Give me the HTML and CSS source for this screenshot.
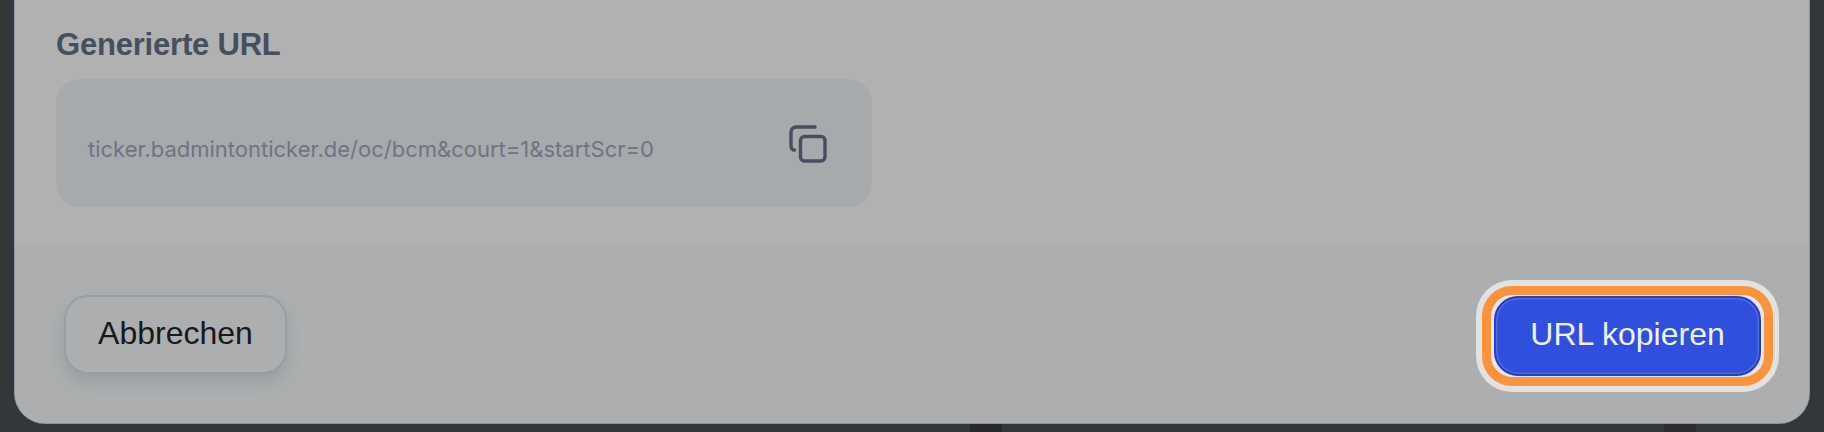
FILE: index.html
```html
<!DOCTYPE html>
<html lang="en">
<head>
    <meta charset="UTF-8">
    <meta name="viewport" content="width=device-width, initial-scale=1.0">
    <title>Generierte URL</title>
    <link rel="stylesheet" href="styles.css">
</head>
<body>
    <div class="modal">
        <div class="modal-body">
            <h3>Generierte URL</h3>
            <div class="url-box">
                <span class="url-text">ticker.badmintonticker.de/oc/bcm&amp;court=1&amp;startScr=0</span>
                <button class="copy-button" aria-label="URL kopieren">
                    <svg viewBox="0 0 38 38" width="38" height="38" fill="none" stroke="#454f60" stroke-width="3.4" stroke-linecap="round" stroke-linejoin="round">
                        <rect x="11.5" y="11.5" width="24.5" height="24.5" rx="4"></rect>
                        <path d="M26 2H7a5 5 0 0 0-5 5v14.5a3.5 3.5 0 0 0 3.5 3.5"></path>
                    </svg>
                </button>
            </div>
        </div>
        <div class="modal-footer">
            <button class="cancel-button">Abbrechen</button>
            <div class="focus-ring">
                <div class="focus-inner">
                    <button class="primary-button">URL kopieren</button>
                </div>
            </div>
        </div>
    </div>
</body>
</html>
```

FILE: styles.css
```css
* {
    box-sizing: border-box;
}
body {
    margin: 0;
    height: 432px;
    overflow: hidden;
    padding: 0 15px;
    background: linear-gradient(to right, #34373a 970px, #26282c 970px, #26282c 1002px, #34373a 1002px, #34373a 1664px, #2b2d31 1664px, #2b2d31 1696px, #34373a 1696px);
    font-family: 'Liberation Sans', Arial, sans-serif;
}
.modal {
    height: 423px;
    background: #b1b1b1;
    border-radius: 0 0 30px 30px;
    box-shadow: -1px 0 0 #8e97a6, 1px 0 0 #8f9396, 0 1px 0 #8f9396;
    display: flex;
    flex-direction: column;
    overflow: hidden;
}
.modal-body {
    height: 246px;
    padding: 28px 41px 0;
}
h3 {
    margin: 0 0 18px;
    height: 33px;
    font-size: 31px;
    line-height: 33px;
    font-weight: bold;
    letter-spacing: -0.2px;
    color: #454f60;
}
.url-box {
    width: 816px;
    height: 128px;
    padding: 0 38px 0 32px;
    background: #a6aaad;
    border-radius: 24px;
    display: flex;
    align-items: center;
    justify-content: space-between;
}
.url-text {
    font-family: 'Inter', sans-serif;
    font-size: 22px;
    color: #6d7584;
    margin-top: 11px;
}
.copy-button {
    padding: 0;
    border: none;
    background: none;
    display: flex;
    margin-top: 1px;
    margin-right: 7px;
}
.modal-footer {
    flex: 1;
    padding: 0 30px 0 49px;
    background: #acaeaf;
    display: flex;
    align-items: flex-start;
    justify-content: space-between;
    border-top: 1px solid #aeb0b0;
}
.cancel-button {
    margin-top: 48px;
    width: 223px;
    height: 79px;
    padding: 0 0 2px;
    background: #acaeb0;
    border: 2px solid #9a9da6;
    border-radius: 24px;
    box-shadow: 0 8px 14px rgba(110, 115, 125, 0.28);
    font-family: inherit;
    font-size: 32px;
    color: #18191b;
}
.focus-ring {
    margin-top: 33px;
    padding: 6px;
    background: #e2e2e2;
    border-radius: 36px;
}
.focus-inner {
    padding: 1px 3px;
    background: #e3e5f0;
    border: 9px solid #fb923c;
    border-radius: 30px;
}
.primary-button {
    display: block;
    width: 267px;
    height: 80px;
    padding: 0 0 3px;
    background: #304fdc;
    border: 2px solid #2a3fc0;
    border-radius: 24px;
    box-shadow: inset 0 0 0 1.5px #4f6be4;
    font-family: inherit;
    font-size: 32px;
    color: #eef1ff;
}
```
